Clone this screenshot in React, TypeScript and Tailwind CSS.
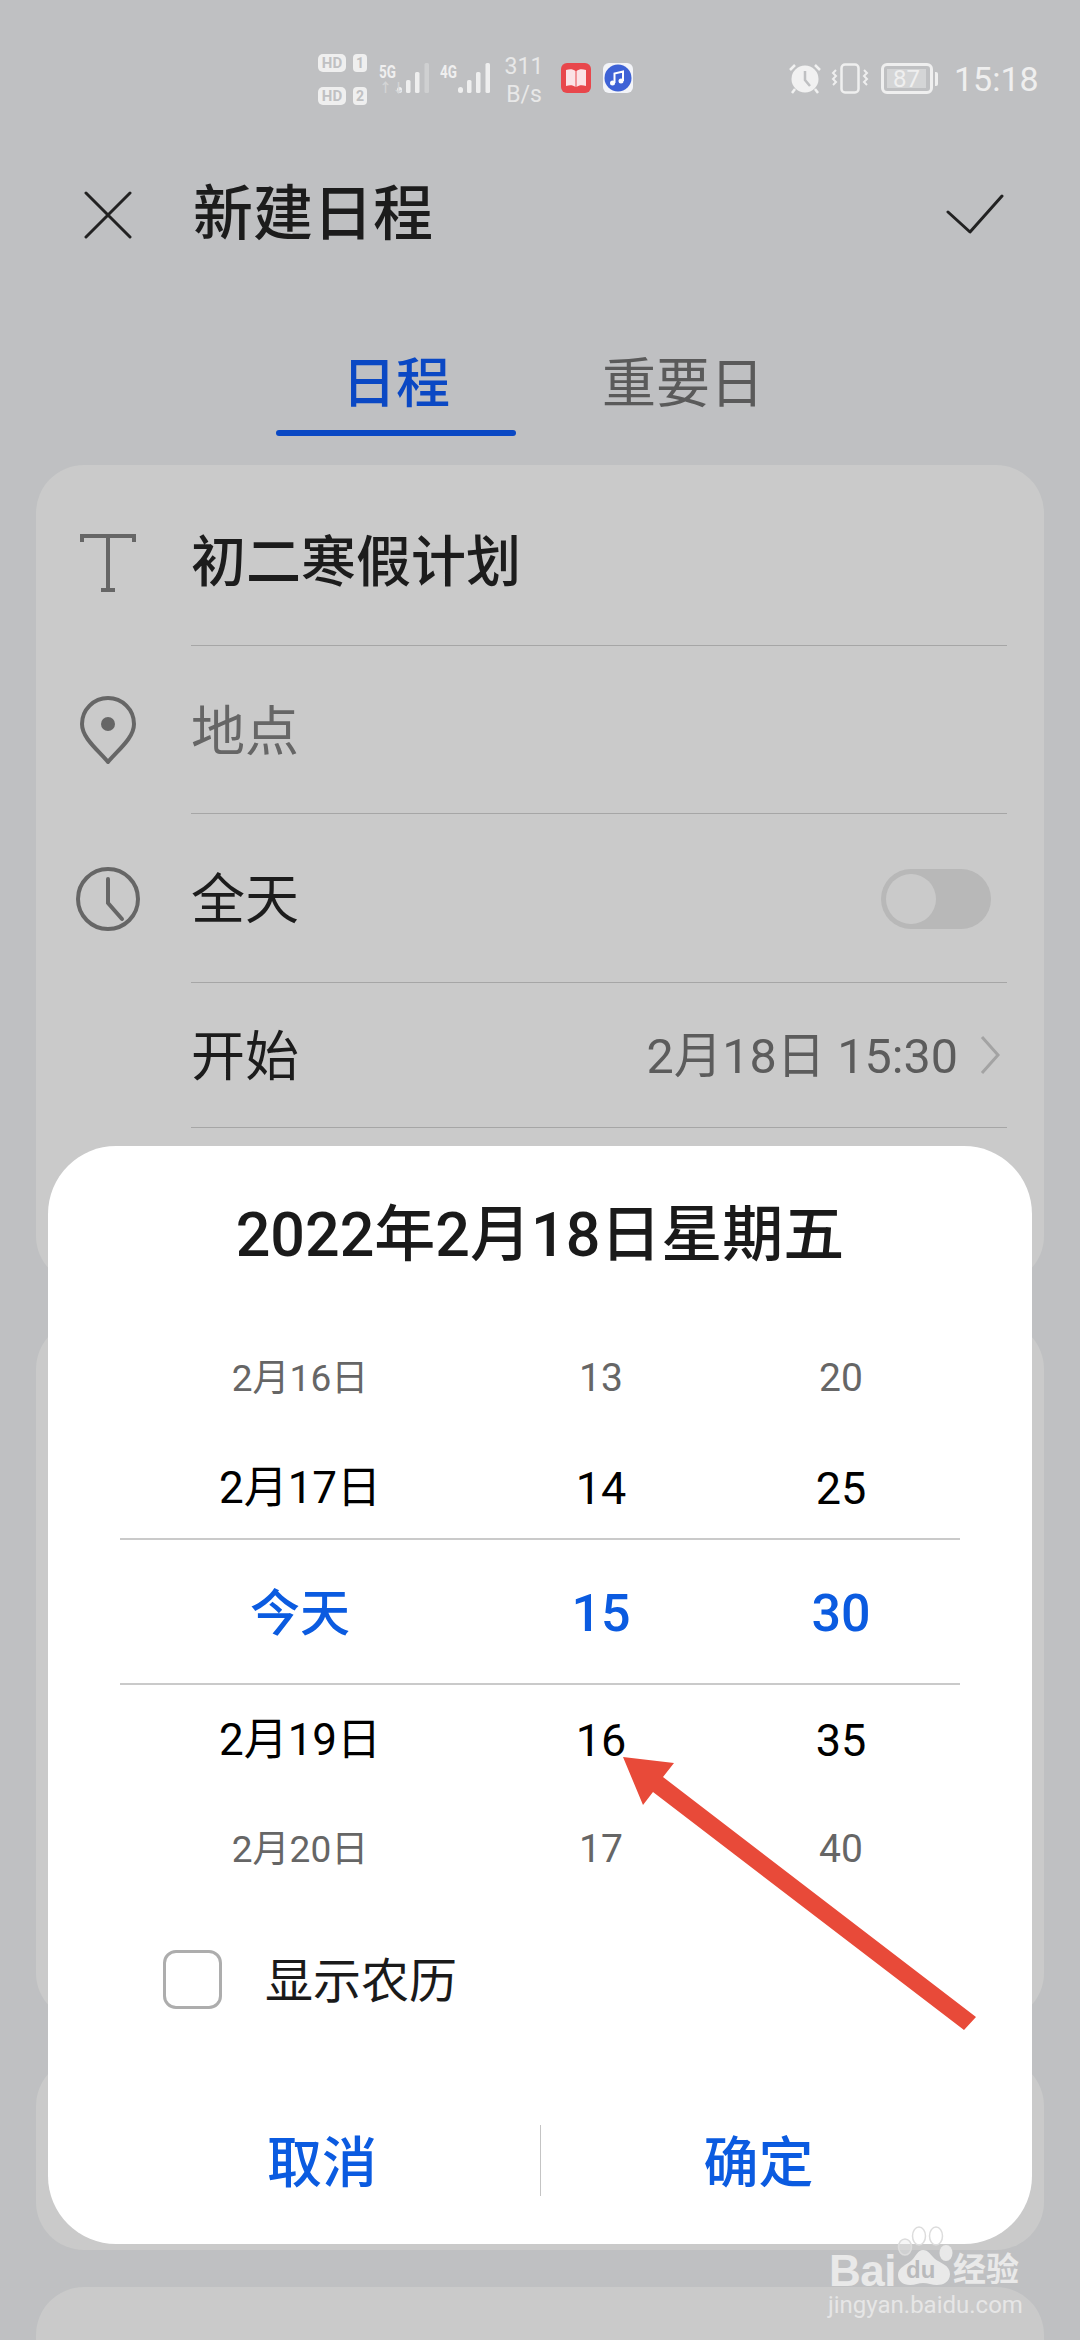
function Hd({ n }: { n: string }) {
  return (
    <div className="flex items-center gap-[7px]">
      <span className="flex h-[18px] w-[28px] items-center justify-center rounded-[5px] bg-[#efefef] text-[15px] leading-none font-bold text-[#bfc0c2]">HD</span>
      <span className="flex h-[18px] w-[14px] items-center justify-center rounded-[4px] bg-[#efefef] text-[14px] leading-none font-bold text-[#bfc0c2]">{n}</span>
    </div>
  );
}

function Bars({ dim }: { dim?: boolean }) {
  return (
    <svg width="32" height="30" viewBox="0 0 32 30" fill="#efefef">
      <rect x="0" y="24" width="5" height="6" rx="2.500" />
      <rect x="9" y="17" width="4.500" height="13" rx="1.500" />
      <rect x="18" y="9" width="4.500" height="21" rx="1.500" />
      <rect x="27.500" y="0" width="4.500" height="30" rx="1.500" fill={dim ? '#cfd0d1' : '#efefef'} />
    </svg>
  );
}

function StatusBar() {
  return (
    <div className="flex h-[120px] items-start pt-[54px] pl-[318px] text-[#efefef]">
      <div className="flex flex-col gap-[15px]">
        <Hd n="1" />
        <Hd n="2" />
      </div>
      <div className="relative mt-[9px] ml-[12px] flex w-[50px] justify-end">
        <span className="absolute top-0 left-0 origin-left scale-x-75 text-[18px] leading-none font-bold">5G</span>
        <span className="absolute top-[18px] left-0 text-[13px] leading-none font-bold text-[#d4d5d6]">↑↓</span>
        <Bars dim />
      </div>
      <div className="relative mt-[9px] ml-[11px] flex w-[50px] justify-end">
        <span className="absolute top-0 left-0 origin-left scale-x-75 text-[18px] leading-none font-bold">4G</span>
        <Bars />
      </div>
      <div className="mt-[-1px] ml-[16px] flex w-[36px] flex-col items-center text-[#e8e8e8]">
        <span className="text-[23px] leading-[28px] whitespace-nowrap">311</span>
        <span className="text-[23px] leading-[28px] whitespace-nowrap">B/s</span>
      </div>
      <svg className="mt-[9px] ml-[19px]" width="30" height="30" viewBox="0 0 30 30">
        <rect width="30" height="30" rx="6" fill="#e8474c" />
        <path d="M5 7c4-1.500 7-1 9.500 1v16c-2.500-2-5.500-2.500-9.500-1z" fill="#fbe3e6" />
        <path d="M25 7c-4-1.500-7-1-9.500 1v16c2.500-2 5.500-2.500 9.500-1z" fill="#fbe3e6" />
      </svg>
      <svg className="mt-[9px] ml-[12px]" width="30" height="30" viewBox="0 0 30 30">
        <rect width="30" height="30" rx="6" fill="#f3f4f8" />
        <circle cx="15" cy="15" r="13.500" fill="#3e62d6" />
        <path d="M11.500 20V10.500l8.500-2V18" fill="none" stroke="#fff" strokeWidth="2" />
        <circle cx="9.500" cy="20" r="2.500" fill="#fff" />
        <circle cx="18" cy="18" r="2.500" fill="#fff" />
      </svg>
      <svg className="mt-[9px] ml-[155px]" width="34" height="31" viewBox="0 0 34 31" fill="#f1f1f1">
        <circle cx="17" cy="16" r="13.500" />
        <path d="M17 8v9l5 6" fill="none" stroke="#bfc0c2" strokeWidth="2.500" />
        <path d="M2 7l5-5M32 7l-5-5M7 26l-3 4M27 26l3 4" fill="none" stroke="#f1f1f1" strokeWidth="2.500" />
      </svg>
      <svg className="mt-[9px] ml-[9px]" width="38" height="31" viewBox="0 0 38 31" fill="none" stroke="#efefef" strokeWidth="2.500">
        <rect x="10.500" y="1.500" width="17" height="28" rx="3.500" />
        <path d="M5 7l-3 3 3 3-3 3 3 3-3 3M33 7l3 3-3 3 3 3-3 3 3 3" strokeWidth="2" />
      </svg>
      <div className="mt-[9px] ml-[12px] flex items-center">
        <div className="flex h-[31px] w-[52px] items-center rounded-[6px] border-[3px] border-[#efefef] p-[3px]">
          <div className="flex h-full w-[39px] items-center justify-center bg-[#d4d5d6] text-[24px] leading-none text-[#efefef]">87</div>
        </div>
        <div className="ml-[2px] h-[14px] w-[3px] rounded-r-[2px] bg-[#efefef]" />
      </div>
      <span className="mt-[8px] ml-[16px] text-[34px] leading-[34px] text-[#efefef]">15:18</span>
    </div>
  );
}

function Row({ icon, first, height, children }: { icon?: React.ReactNode; first?: boolean; height: string; children: React.ReactNode }) {
  return (
    <div className={`flex ${height} ${first ? 'mt-[14px]' : ''}`}>
      <div className="flex w-[155px] shrink-0 items-center justify-center pr-[11px]">{icon}</div>
      <div className="flex flex-1 items-center justify-between border-b-[1.5px] border-[#a6a6a6]">{children}</div>
    </div>
  );
}

const wheel = [
  { h: 'h-[108px]', date: 'text-[37px]', num: 'text-[39px]', c: 'text-[#666666]', v: ['2月16日', '13', '20'] },
  { h: 'h-[106px] pt-[6px]', date: 'text-[44px]', num: 'text-[45px]', c: 'text-black', v: ['2月17日', '14', '25'] },
  { h: 'h-[147px] border-y-2 border-[#cacaca] pt-[5px]', date: 'text-[50px]', num: 'text-[52px]', c: 'font-medium text-[#0b5be0]', v: ['今天', '15', '30'] },
  { h: 'h-[108px] pt-[2px]', date: 'text-[44px]', num: 'text-[45px]', c: 'text-black', v: ['2月19日', '16', '35'] },
  { h: 'h-[110px] pt-[2px]', date: 'text-[37px]', num: 'text-[39px]', c: 'text-[#666666]', v: ['2月20日', '17', '40'] },
];

function Dialog() {
  return (
    <div className="absolute top-[1146px] left-[48px] h-[1098px] w-[984px] rounded-[68px] bg-white">
      <div className="flex h-[178px] items-center justify-center text-[61px] leading-none font-medium text-[#1a1a1a]">2022年2月18日星期五</div>
      <div className="mx-[72px]">
        {wheel.map((r) => (
          <div key={r.v[1]} className={`grid grid-cols-[360px_242px_238px] items-center ${r.h} ${r.c}`}>
            <span className={`text-center leading-none ${r.date}`}>{r.v[0]}</span>
            <span className={`text-center leading-none ${r.num}`}>{r.v[1]}</span>
            <span className={`text-center leading-none ${r.num}`}>{r.v[2]}</span>
          </div>
        ))}
      </div>
      <div className="flex h-[154px] items-center pb-[2px] pl-[115px]">
        <div className="h-[59px] w-[59px] rounded-[13px] border-[3px] border-[#adadad]" />
        <span className="ml-[43px] pt-[6px] text-[48px] leading-none text-[#1a1a1a]">显示农历</span>
      </div>
      <div className="mt-[68px] grid h-[71px] grid-cols-[437px_435px] px-[56px] text-[55px] font-medium text-[#0b5be0]">
        <span className="flex items-center justify-center border-r-[1.5px] border-[#c4c4c4] pt-[6px] leading-none">取消</span>
        <span className="flex items-center justify-center pt-[6px] leading-none">确定</span>
      </div>
    </div>
  );
}

function Watermark() {
  return (
    <div className="absolute top-[2225px] left-[825px] h-[100px] w-[200px] text-[#e9e9e9]">
      <span className="absolute top-[24px] left-[4px] text-[44px] leading-none font-bold tracking-[-0.5px] [font-family:'Liberation_Sans',sans-serif]">Bai</span>
      <svg className="absolute top-0 left-[68px]" width="70" height="64" viewBox="0 0 70 64">
        <ellipse cx="12" cy="22" rx="6.500" ry="8" fill="#e9e9e9" fillOpacity="0.4" stroke="#dcdcdc" strokeWidth="1.500" />
        <ellipse cx="26" cy="11" rx="6.500" ry="9" fill="#fff" fillOpacity="0.4" stroke="#dcdcdc" strokeWidth="1.500" />
        <ellipse cx="43" cy="11" rx="6.500" ry="9" fill="#fff" fillOpacity="0.4" stroke="#dcdcdc" strokeWidth="1.500" />
        <ellipse cx="53" cy="28" rx="6.500" ry="8" fill="#e9e9e9" />
        <path d="M30 25c5 0 8 5 12 9 5 4 15 6 15 15 0 8-7 11-13 11-5 0-9-2-14-2-4 0-8 2-13 2-7 0-12-4-12-10 0-8 9-10 14-15 4-4 6-10 11-10z" fill="#e9e9e9" />
      </svg>
      <span className="absolute top-[33px] left-[81px] text-[24px] leading-none font-bold text-[#b9babc] [font-family:'Liberation_Sans',sans-serif]">du</span>
      <span className="absolute top-[28px] left-[128px] text-[33px] leading-none font-bold">经验</span>
      <span className="absolute top-[68px] left-[3px] text-[24px] leading-none whitespace-nowrap text-[#e6e6e6]">jingyan.baidu.com</span>
    </div>
  );
}

export default function App() {
  return (
    <div className="relative h-[2340px] w-[1080px] overflow-hidden bg-[#bfc0c2] [font-family:Roboto,'Noto_Sans_CJK_SC',sans-serif]">
      <StatusBar />

      <div className="flex h-[190px] items-center justify-between pr-[76px] pl-[84px]">
        <div className="flex items-center">
          <svg width="48" height="48" viewBox="0 0 48 48" fill="none" stroke="#222222" strokeWidth="3" strokeLinecap="round">
            <path d="M2 2l44 44M46 2L2 46" />
          </svg>
          <span className="ml-[61px] text-[60px] leading-none font-medium text-[#1c1c1c]">新建日程</span>
        </div>
        <svg className="mt-[-2px]" width="58" height="40" viewBox="0 0 58 40" fill="none" stroke="#222222" strokeWidth="3" strokeLinecap="round" strokeLinejoin="round">
          <path d="M2 18l22 20L56 2" />
        </svg>
      </div>

      <div className="flex h-[126px] pl-[276px]">
        <div className="flex h-full w-[240px] flex-col">
          <span className="flex h-[120px] items-center justify-center pt-[30px] text-[54px] leading-none font-medium text-[#0a48c4]">日程</span>
          <div className="h-[6px] rounded-full bg-[#0a48c4]" />
        </div>
        <span className="flex h-[120px] w-[334px] items-center justify-center pt-[30px] text-[54px] leading-none text-[#5a5a5a]">重要日</span>
      </div>

      <div className="mt-[29px] flex flex-col gap-[37px] px-[36px]">
        <div className="h-[819px] rounded-[48px] bg-[#cacaca] pr-[37px]">
          <Row first height="h-[167px]" icon={
            <svg width="56" height="60" viewBox="0 0 56 60" fill="none" stroke="#666666" strokeWidth="4">
              <path d="M2 9V3h52v6M28 3v54M21 57h14" />
            </svg>
          }>
            <span className="text-[55px] leading-none font-medium text-[#1c1c1c]">初二寒假计划</span>
          </Row>
          <Row height="h-[168px]" icon={
            <svg width="56" height="68" viewBox="0 0 56 68" fill="none" stroke="#666666" strokeWidth="4">
              <path d="M28 66C18 54 2 42 2 28a26 26 0 0 1 52 0c0 14-16 26-26 38z" strokeLinejoin="round" />
              <circle cx="28" cy="28" r="7" fill="#666666" stroke="none" />
            </svg>
          }>
            <span className="pt-[6px] text-[54px] leading-none text-[#666666]">地点</span>
          </Row>
          <Row height="h-[169px]" icon={
            <svg width="64" height="64" viewBox="0 0 64 64" fill="none" stroke="#666666" strokeWidth="4">
              <circle cx="32" cy="32" r="30" />
              <path d="M32 12v24l14 16" strokeLinecap="round" />
            </svg>
          }>
            <span className="pt-[6px] text-[54px] leading-none text-[#1c1c1c]">全天</span>
            <div className="relative mt-[2px] mr-[16px] h-[60px] w-[110px] rounded-full bg-[#b8b8b8]">
              <div className="absolute top-[5px] left-[5px] h-[50px] w-[50px] rounded-full bg-[#cacaca]" />
            </div>
          </Row>
          <Row height="h-[145px]">
            <span className="pt-[6px] text-[54px] leading-none text-[#1c1c1c]">开始</span>
            <div className="flex items-center text-[#5c5c5c]">
              <span className="pt-[4px] text-[48.5px] leading-none">2月18日 15:30</span>
              <svg className="mr-[7px] ml-[22px]" width="20" height="40" viewBox="0 0 20 40" fill="none" stroke="#a3a3a3" strokeWidth="3">
                <path d="M2 2l16 18L2 38" />
              </svg>
            </div>
          </Row>
        </div>
        <div className="h-[700px] rounded-[48px] bg-[#cacaca]" />
        <div className="h-[192px] rounded-[48px] bg-[#cacaca]" />
        <div className="h-[192px] rounded-[48px] bg-[#cacaca]" />
      </div>

      <Dialog />

      <svg className="absolute top-[1750px] left-[615px]" width="370" height="290" viewBox="615 1750 370 290">
        <polygon points="623,1757 674,1763 663,1777 976,2017 964,2030 653,1792 643,1805" fill="#e84a39" />
      </svg>

      <Watermark />
    </div>
  );
}
